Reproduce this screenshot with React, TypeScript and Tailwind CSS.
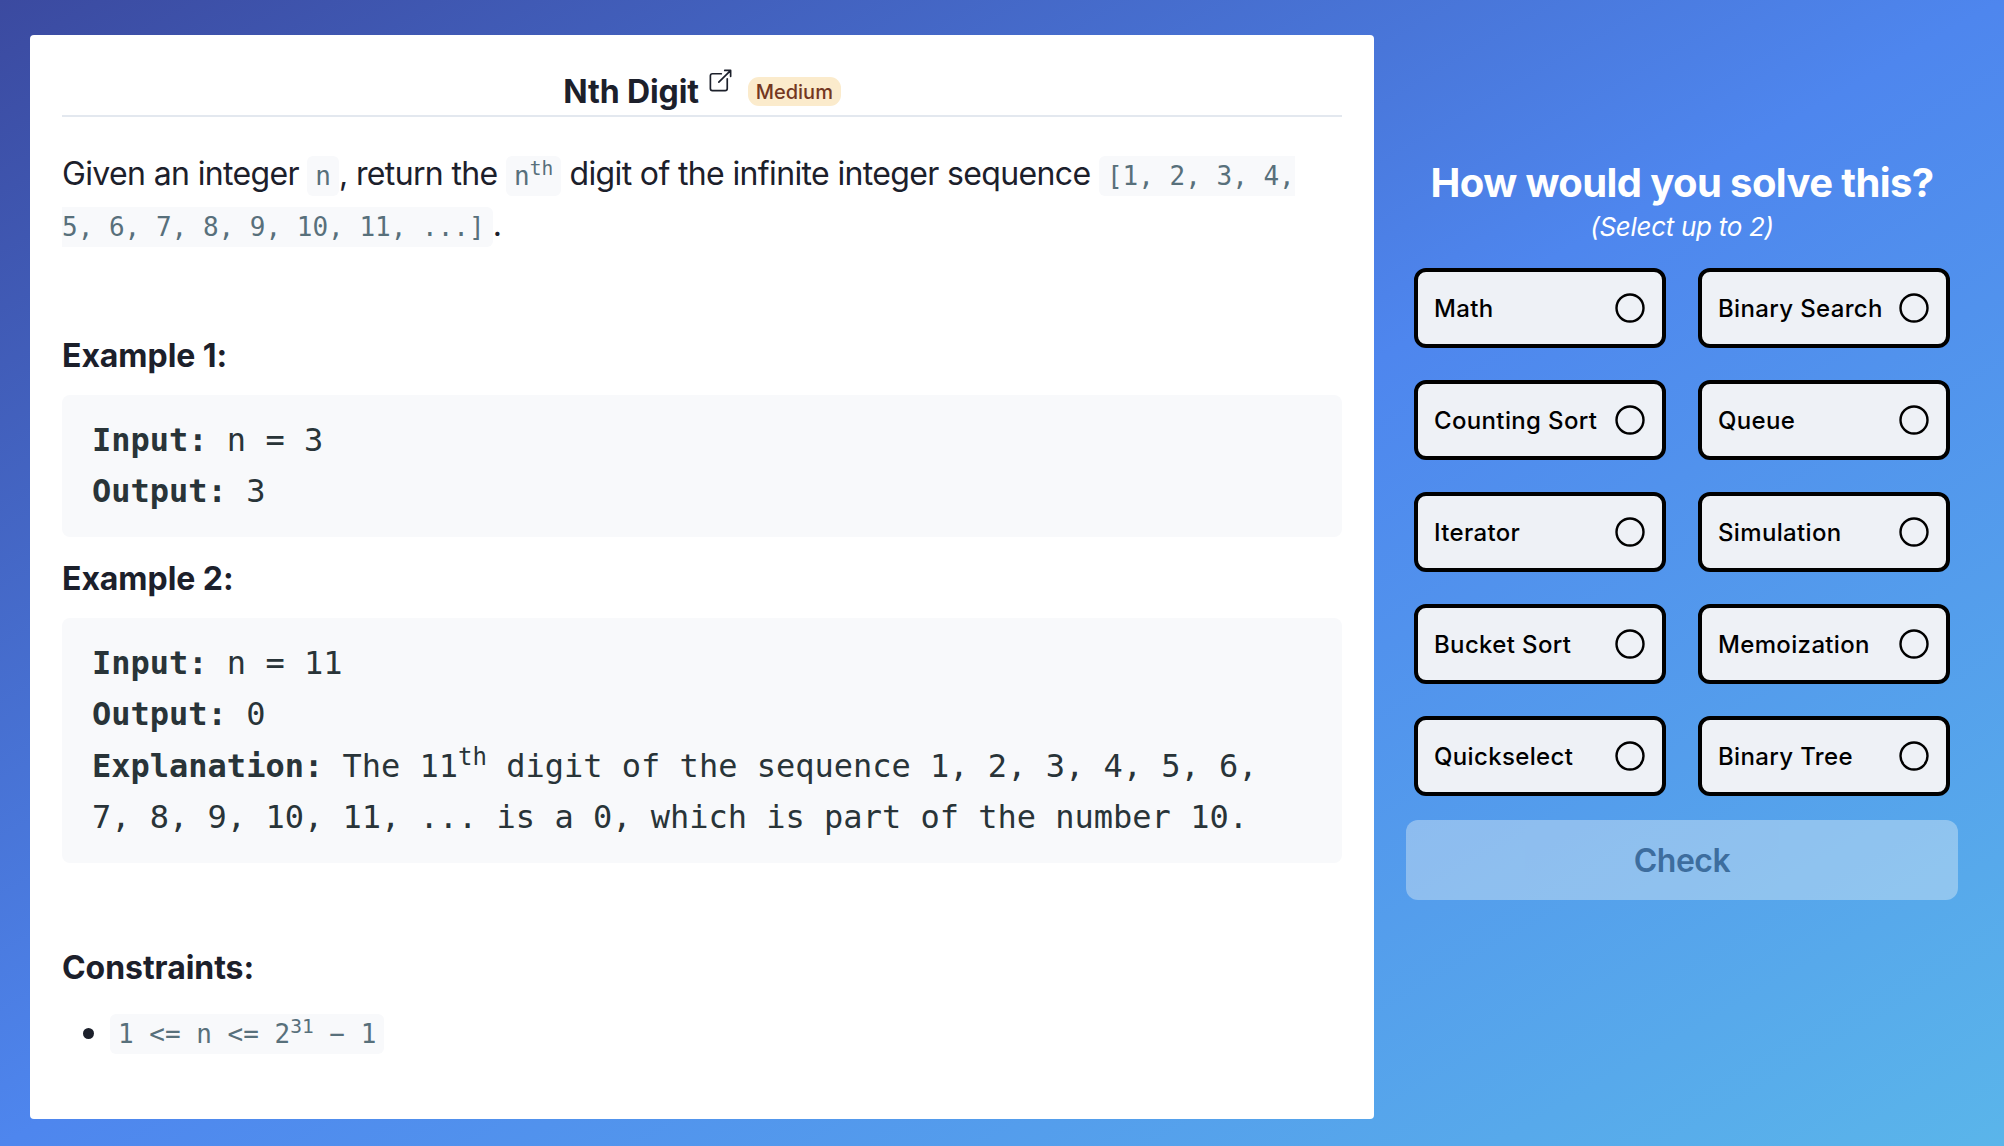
import React, { useState } from "react";
import { IoOpenOutline } from "react-icons/io5";

const topics = [
  "Math",
  "Binary Search",
  "Counting Sort",
  "Queue",
  "Iterator",
  "Simulation",
  "Bucket Sort",
  "Memoization",
  "Quickselect",
  "Binary Tree",
];

const Code = ({ children }: { children: React.ReactNode }) => (
  <code className="rounded-md bg-[#f8f9fb] px-2 py-[5px] font-['DejaVu_Sans_Mono',monospace] text-[26px] leading-none tracking-normal text-[#58707b]">
    {children}
  </code>
);

const Pre = ({ children }: { children: React.ReactNode }) => (
  <pre className="rounded-lg bg-[#f8f9fb] px-[30px] py-5 font-['DejaVu_Sans_Mono',monospace] leading-[51.2px] whitespace-pre-wrap text-[#293438]">
    {children}
  </pre>
);

const Heading = ({ children }: { children: React.ReactNode }) => (
  <p className="font-bold tracking-[-0.05px]">{children}</p>
);

const Problem = () => (
  <section className="h-[1084px] w-[1344px] rounded-sm bg-white px-8 text-[32px] leading-[51.2px] text-[#1c202b]">
    <header className="flex h-[82px] items-end justify-center border-b-2 border-[#e3e8ef] pb-[9px]">
      <h1 className="-mb-[4px] text-[32px] leading-9 font-bold tracking-[-0.1px]">
        Nth Digit
      </h1>
      <a href="#" className="mb-3 ml-2">
        <IoOpenOutline className="size-[27px]" />
      </a>
      <span className="ml-3.5 flex h-[29px] w-[93px] items-center justify-center rounded-[11px] bg-[#fbebcc] text-xl leading-none font-medium text-[#74371f]">
        Medium
      </span>
    </header>
    <p className="mt-[31px] pr-4 tracking-[-0.64px]">
      Given an integer <Code>n</Code>, return the{" "}
      <Code>
        n<sup>th</sup>
      </Code>{" "}
      digit of the infinite integer sequence{" "}
      <Code>[1, 2, 3, 4, 5, 6, 7, 8, 9, 10, 11, ...]</Code>.
    </p>
    <div className="mt-20 mb-[13px]">
      <Heading>Example 1:</Heading>
    </div>
    <Pre>
      <b>Input:</b> n = 3{"\n"}
      <b>Output:</b> 3
    </Pre>
    <div className="mt-4 mb-[14px]">
      <Heading>Example 2:</Heading>
    </div>
    <Pre>
      <b>Input:</b> n = 11{"\n"}
      <b>Output:</b> 0{"\n"}
      <b>Explanation:</b> The 11<sup>th</sup> digit of the sequence 1, 2, 3, 4,
      5, 6, 7, 8, 9, 10, 11, ... is a 0, which is part of the number 10.
    </Pre>
    <div className="mt-[79px] mb-[13px]">
      <Heading>Constraints:</Heading>
    </div>
    <ul>
      <li className="flex items-center pl-[21px]">
        <span className="mt-1 mr-4 size-[11px] rounded-full bg-[#1c202b]" />
        <span>
          <Code>
            1 &lt;= n &lt;= 2<sup>31</sup> − 1
          </Code>
        </span>
      </li>
    </ul>
  </section>
);

const Answers = () => {
  const [selected, setSelected] = useState<string[]>([]);

  const toggle = (topic: string) => {
    if (selected.includes(topic)) {
      setSelected(selected.filter((t) => t !== topic));
    } else if (selected.length < 2) {
      setSelected([...selected, topic]);
    }
  };

  return (
    <section className="mt-[124px] ml-8 flex w-[552px] flex-col items-center">
      <h2 className="text-[40px] leading-[48px] font-bold tracking-[-0.6px] text-white">
        How would you solve this?
      </h2>
      <p className="text-[26px] leading-10 tracking-[-0.3px] text-white italic">
        (Select up to 2)
      </p>
      <div className="mt-[21px] grid grid-cols-2 gap-8">
        {topics.map((topic) => (
          <button
            key={topic}
            onClick={() => toggle(topic)}
            className="flex h-20 w-[252px] items-center justify-between rounded-xl border-4 border-black bg-[#eef1f6] pr-[17px] pl-4 text-2xl font-medium tracking-[0.35px] text-black"
          >
            <span className="pt-0.5">{topic}</span>
            <svg viewBox="0 0 30 30" className="size-[30px]">
              <circle
                cx="15"
                cy="15"
                r="13.5"
                fill={selected.includes(topic) ? "currentColor" : "none"}
                stroke="currentColor"
                strokeWidth="2.4"
              />
            </svg>
          </button>
        ))}
      </div>
      <button
        disabled={selected.length === 0}
        className="mt-6 h-20 w-full rounded-xl bg-[#e6f0f4] pt-0.5 text-[32px] font-semibold tracking-[-0.5px] text-[#1a202c] disabled:opacity-40"
      >
        Check
      </button>
    </section>
  );
};

const App = () => {
  return (
    <main className="flex h-[1146px] items-start overflow-hidden bg-[linear-gradient(to_bottom_right,#3b4aa0,#4e86ee_50%,#5ab5ea)] pt-[35px] pl-[30px] font-[Inter,sans-serif]">
      <Problem />
      <Answers />
    </main>
  );
};

export default App;
